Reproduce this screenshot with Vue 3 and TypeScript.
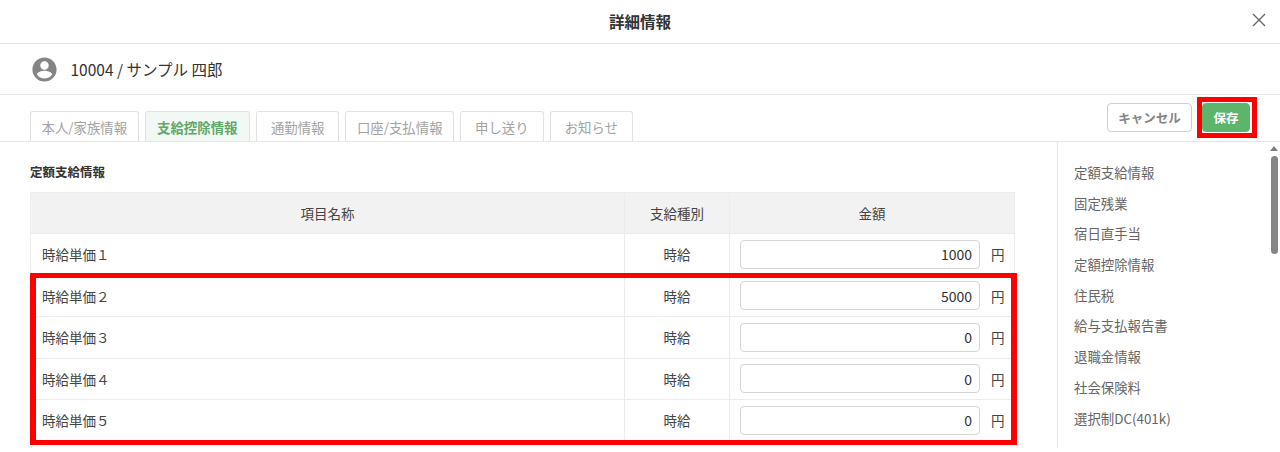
<script setup lang="ts">
const tabs = ['本人/家族情報', '支給控除情報', '通勤情報', '口座/支払情報', '申し送り', 'お知らせ']
const rows = [
  { name: '時給単価１', value: '1000' },
  { name: '時給単価２', value: '5000' },
  { name: '時給単価３', value: '0' },
  { name: '時給単価４', value: '0' },
  { name: '時給単価５', value: '0' },
]
const nav = ['定額支給情報', '固定残業', '宿日直手当', '定額控除情報', '住民税', '給与支払報告書', '退職金情報', '社会保険料', '選択制DC(401k)']
</script>

<template>
  <div class="page">
    <header class="title">
      <span class="title-text">詳細情報</span>
      <svg class="close" viewBox="0 0 14 14" width="14" height="14" aria-label="閉じる">
        <path d="M1 1L13 13M13 1L1 13" stroke="#666" stroke-width="1.4" fill="none" />
      </svg>
    </header>
    <div class="person">
      <svg class="avatar" viewBox="0 0 24 24" width="29" height="29">
        <path fill="#858585" d="M12 2C6.48 2 2 6.48 2 12s4.48 10 10 10 10-4.48 10-10S17.52 2 12 2zm0 3.2c1.93 0 3.5 1.57 3.5 3.5S13.93 12.2 12 12.2 8.500 10.630 8.500 8.700 10.070 5.200 12 5.200zm0 14.300c-2.600 0-4.900-1.300-6.300-3.300 0-2.100 4.200-3.200 6.300-3.200s6.300 1.100 6.300 3.200c-1.400 2-3.700 3.300-6.300 3.300z" />
      </svg>
      <span class="person-name">10004 / サンプル 四郎</span>
    </div>
    <div class="toolbar">
      <nav class="tabs">
        <div v-for="(t, i) in tabs" :key="t" class="tab" :class="{ active: i === 1 }">{{ t }}</div>
      </nav>
      <div class="actions">
        <button class="btn cancel">キャンセル</button>
        <div class="save-wrap">
          <button class="btn save">保存</button>
          <div class="mark save-mark"></div>
        </div>
      </div>
    </div>
    <div class="body">
      <main class="main">
        <h2 class="section">定額支給情報</h2>
        <div class="table-wrap">
          <div class="row head">
            <div class="c c1">項目名称</div>
            <div class="c c2">支給種別</div>
            <div class="c c3">金額</div>
          </div>
          <div v-for="r in rows" :key="r.name" class="row">
            <div class="c c1 name">{{ r.name }}</div>
            <div class="c c2">時給</div>
            <div class="c c3 amount">
              <div class="input">{{ r.value }}</div>
              <span class="yen">円</span>
            </div>
          </div>
          <div class="mark rows-mark"></div>
        </div>
      </main>
      <aside class="side">
        <a v-for="n in nav" :key="n" class="side-item">{{ n }}</a>
      </aside>
      <div class="scrollbar">
        <div class="arrow"></div>
        <div class="thumb"></div>
      </div>
    </div>
  </div>
</template>

<style>
html, body { margin: 0; background: #fff; overflow: hidden; }
</style>

<style scoped>
.page {
  width: 1280px;
  height: 452px;
  overflow: hidden;
  display: flex;
  flex-direction: column;
  font-family: "Noto Sans CJK JP", "Noto Sans", sans-serif;
  color: #333;
  background: #fff;
}
.title {
  position: relative;
  height: 43px;
  flex: none;
  display: flex;
  align-items: center;
  justify-content: center;
  border-bottom: 1px solid #e6e6e6;
}
.title-text { font-size: 15.500px; font-weight: 700; color: #333; position: relative; top: -1px; }
.close { position: absolute; right: 14px; top: 13px; }
.person {
  height: 50px;
  flex: none;
  display: flex;
  align-items: center;
  gap: 11.500px;
  padding-left: 30px;
  border-bottom: 1px solid #e6e6e6;
}
.person-name { font-size: 15.500px; color: #333; }
.toolbar {
  height: 46px;
  flex: none;
  display: flex;
  justify-content: space-between;
  padding: 0 30px;
  border-bottom: 1px solid #e6e6e6;
}
.tabs { display: flex; gap: 6px; align-items: flex-end; }
.tab {
  height: 30px;
  min-width: 83.500px;
  box-sizing: border-box;
  padding: 0 10.500px;
  display: flex;
  align-items: center;
  justify-content: center;
  font-size: 13.400px;
  color: #a3a3a3;
  border: 1px solid #e2e2e2;
  border-bottom: none;
  border-radius: 3px 3px 0 0;
  background: #fff;
}
.tab.active {
  padding: 0 11.500px;
  color: #5fa968;
  font-weight: 700;
  background: #f2f8f3;
}
.actions { display: flex; gap: 10px; align-items: flex-start; padding-top: 8px; }
.btn {
  height: 29px;
  box-sizing: border-box;
  border-radius: 4px;
  font-family: inherit;
  font-size: 12.500px;
  font-weight: 700;
  padding: 0;
}
.cancel { width: 85px; background: #fff; border: 1px solid #cfcfcf; color: #858585; }
.save-wrap { position: relative; }
.save { display: block; width: 48px; background: #5cb56b; border: 1px solid #5cb56b; color: #fff; }
.mark { position: absolute; border: 5px solid #f00; box-sizing: border-box; pointer-events: none; }
.save-mark { left: -5px; top: -6px; width: 60px; height: 41px; }
.body { flex: 1; display: flex; min-height: 0; position: relative; }
.main { width: 1057px; flex: none; padding: 21px 0 0 30px; box-sizing: border-box; }
.section { margin: 0 0 12px; font-size: 12.500px; line-height: 17px; font-weight: 700; color: #333; }
.table-wrap {
  position: relative;
  width: 985px;
  border: 1px solid #ececec;
  border-bottom: none;
  box-sizing: border-box;
}
.row { display: flex; height: 41.500px; border-bottom: 1px solid #ececec; box-sizing: border-box; font-size: 13.500px; color: #444; }
.row.head { height: 41px; background: #f2f2f2; }
.c { display: flex; align-items: center; justify-content: center; box-sizing: border-box; }
.c1 { width: 593px; }
.c2 { width: 105px; border-left: 1px solid #ececec; }
.c3 { flex: 1; border-left: 1px solid #ececec; }
.name { justify-content: flex-start; padding-left: 11px; font-size: 13.500px; }
.amount { justify-content: flex-start; padding-left: 10px; gap: 11px; }
.input {
  width: 240px;
  height: 29px;
  box-sizing: border-box;
  border: 1px solid #d4d4d4;
  border-radius: 4px;
  display: flex;
  align-items: center;
  justify-content: flex-end;
  padding-right: 7px;
  font-size: 14px;
  color: #333;
}
.yen { font-size: 13.500px; color: #444; }
.rows-mark { left: -1px; top: 80px; width: 987px; height: 172px; border-width: 5px 6px; }
.side {
  width: 213px;
  flex: none;
  height: 306px;
  border-left: 1px solid #e6e6e6;
  box-sizing: border-box;
  padding: 15px 0 0 16px;
  display: flex;
  flex-direction: column;
}
.side-item { height: 30.700px; line-height: 30.700px; font-size: 13.400px; color: #666; flex: none; }
.scrollbar { position: relative; width: 10px; flex: none; }
.arrow {
  position: absolute; left: 0; top: 4px; width: 0; height: 0;
  border-left: 4px solid transparent; border-right: 4px solid transparent; border-bottom: 5px solid #7f7f7f;
}
.thumb { position: absolute; left: 1px; top: 14px; width: 7px; height: 98px; border-radius: 4px; background: #858585; }
</style>
